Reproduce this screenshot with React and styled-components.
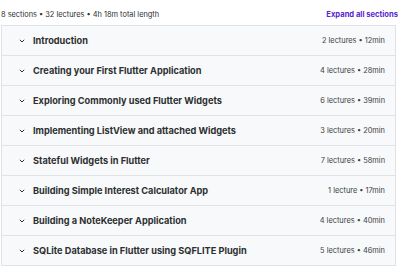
import React from 'react'
import styled, { createGlobalStyle } from 'styled-components'

const GlobalStyle = createGlobalStyle`
  body {
    margin: 0;
    background: #ffffff;
    font-family: Inter, "Liberation Sans", sans-serif;
    color: #2d2f31;
  }
`

const sections = [
  { title: 'Introduction', lectures: 2, time: '12min' },
  { title: 'Creating your First Flutter Application', lectures: 4, time: '28min' },
  { title: 'Exploring Commonly used Flutter Widgets', lectures: 6, time: '39min' },
  { title: 'Implementing ListView and attached Widgets', lectures: 3, time: '20min' },
  { title: 'Stateful Widgets in Flutter', lectures: 7, time: '58min' },
  { title: 'Building Simple Interest Calculator App', lectures: 1, time: '17min' },
  { title: 'Building a NoteKeeper Application', lectures: 4, time: '40min' },
  { title: 'SQLite Database in Flutter using SQFLITE Plugin', lectures: 5, time: '46min' }
]

const Chevron = () => (
  <svg width="6" height="4" viewBox="0 0 6 4" fill="none">
    <path d="M0.8 0.8l2.2 2.2 2.2-2.2" stroke="#2d2f31" strokeWidth="1" />
  </svg>
)

const App = () => (
  <Page>
    <GlobalStyle />
    <Header>
      <Summary>8 sections • 32 lectures • 4h 18m total length</Summary>
      <ExpandLink>Expand all sections</ExpandLink>
    </Header>
    <List>
      {sections.map(s => (
        <Row key={s.title}>
          <Left>
            <Chevron />
            <Title>{s.title}</Title>
          </Left>
          <Meta>
            {s.lectures} {s.lectures === 1 ? 'lecture' : 'lectures'} • {s.time}
          </Meta>
        </Row>
      ))}
    </List>
  </Page>
)

const Page = styled('div')`
  width: 400px;
  padding: 0 2px 0 1px;
  box-sizing: border-box;
`

const Header = styled('div')`
  display: flex;
  justify-content: space-between;
  align-items: center;
  height: 25px;
  padding-top: 3px;
  box-sizing: border-box;
`

const Summary = styled('span')`
  font-size: 7.4px;
  color: #2d2f31;
`

const ExpandLink = styled('span')`
  font-size: 7.6px;
  font-weight: 700;
  color: #5624d0;
`

const List = styled('div')`
  margin-right: 2px;
  border: 1px solid #dfe3e6;
  border-bottom: none;
`

const Row = styled('div')`
  display: flex;
  justify-content: space-between;
  align-items: center;
  height: 29px;
  padding: 0 10px 0 17px;
  background: #f7f9fa;
  border-bottom: 1px solid #dfe3e6;
`

const Left = styled('div')`
  display: flex;
  align-items: center;
  gap: 8px;
`

const Title = styled('span')`
  font-size: 9.2px;
  font-weight: 700;
  color: #2d2f31;
`

const Meta = styled('span')`
  font-size: 7.4px;
  color: #3e4143;
`

export default App
